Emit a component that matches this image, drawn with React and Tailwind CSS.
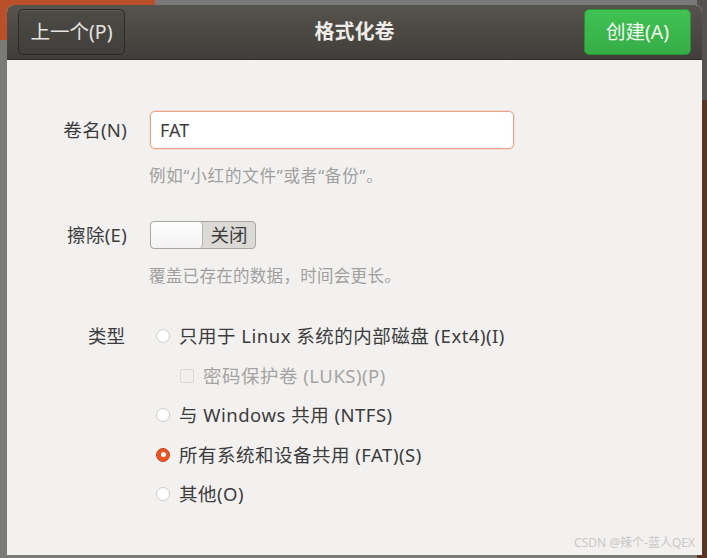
import React, { useState } from 'react';

const font = { fontFamily: '"Noto Sans", "Noto Sans CJK SC", sans-serif' };

const Radio = ({ checked }) => (
    <span
        className={`w-[14px] h-[14px] rounded-full border shrink-0 flex items-center justify-center ${checked ? 'bg-[#e95420] border-[#c7461a]' : 'bg-white border-[#cfcdca]'}`}
    >
        {checked && <span className="w-[5px] h-[5px] rounded-full bg-white" />}
    </span>
);

const App = () => {
    const [volumeName, setVolumeName] = useState('FAT');
    const [type, setType] = useState('fat');

    const options = [
        { id: 'ext4', label: '只用于 Linux 系统的内部磁盘 (Ext4)(I)' },
        { id: 'ntfs', label: '与 Windows 共用 (NTFS)' },
        { id: 'fat', label: '所有系统和设备共用 (FAT)(S)' },
        { id: 'other', label: '其他(O)' },
    ];

    return (
        <div className="relative w-[707px] h-[558px] overflow-hidden bg-[#7a7a78]" style={font}>
            {/* desktop behind the dialog */}
            <div className="absolute left-0 top-0 w-[155px] h-[40px] bg-[#b9502a]" />
            <div className="absolute right-0 top-[100px] w-[10px] h-[460px] bg-[#5a3424]" />
            <div className="absolute right-0 top-0 w-[10px] h-[100px] bg-[#55534f]" />

            <div className="relative ml-[7px] mt-[5px] w-[695px] h-[550px] rounded-t-[7px] overflow-hidden bg-[#f2f1f0] flex flex-col">
                {/* Header */}
                <div className="h-[55px] shrink-0 bg-gradient-to-b from-[#57544e] to-[#403e3a] border-b border-[#2f2e2b] flex items-center justify-between px-[11px]">
                    <button className="w-[107px] h-[46px] rounded-[5px] border border-[#2b2a27] bg-gradient-to-b from-[#4d4b46] to-[#413f3b] shadow-[inset_0_1px_0_rgba(255,255,255,0.08)] text-[#e6e4e0] text-[19.5px] leading-none">
                        上一个(P)
                    </button>
                    <div className="text-[#eeece8] text-[20px] font-bold leading-none">格式化卷</div>
                    <button className="w-[107px] h-[46px] rounded-[5px] border border-[#2a8f37] bg-gradient-to-b from-[#41c253] to-[#35ad46] text-[#f4fbf4] text-[19.5px] leading-none">
                        创建(A)
                    </button>
                </div>

                {/* Body */}
                <div className="flex flex-col pt-[51px]">
                    <div className="flex items-center h-[38px]">
                        <div className="w-[120px] text-right text-[18.5px] leading-[24px] tracking-[0.3px] text-[#3c3c3c]">卷名(N)</div>
                        <div className="ml-[23px] w-[364px] h-[38px] rounded-[5px] border border-[#e8a38a] bg-white shadow-[0_0_0_1px_rgba(233,84,32,0.12)] flex items-center px-[9px]">
                            <input
                                value={volumeName}
                                onChange={(e) => setVolumeName(e.target.value)}
                                className="w-full outline-none text-[18px] text-[#3c3c3c] bg-transparent caret-[#3c3c3c]"
                            />
                        </div>
                    </div>
                    <div className="ml-[142px] mt-[15px] text-[16.5px] leading-[24px] tracking-[0.8px] text-[#a09f9d]">例如“小红的文件”或者“备份”。</div>

                    <div className="flex items-center mt-[33px] h-[28px]">
                        <div className="w-[120px] text-right text-[18.5px] leading-[24px] tracking-[0.3px] text-[#3c3c3c]">擦除(E)</div>
                        <div className="ml-[23px] w-[106px] h-[28px] rounded-[4px] border border-[#a9a7a3] bg-[#dcdad7] flex overflow-hidden">
                            <div className="w-[52px] h-full rounded-[4px] bg-gradient-to-b from-white to-[#f3f2f1] border-r border-[#b6b4b0]" />
                            <div className="flex-1 flex items-center justify-center text-[18.5px] leading-none text-[#3c3c3c]">关闭</div>
                        </div>
                    </div>
                    <div className="ml-[142px] mt-[15px] text-[16.5px] leading-[24px] tracking-[0.3px] text-[#a09f9d]">覆盖已存在的数据，时间会更长。</div>

                    <div className="flex mt-[36px]">
                        <div className="w-[118px] text-right text-[18.5px] text-[#3c3c3c] leading-[24px]">类型</div>
                        <div className="ml-[31px] flex flex-col gap-[15.5px]">
                            {options.map((o) => (
                                <React.Fragment key={o.id}>
                                    <label
                                        onClick={() => setType(o.id)}
                                        className="flex items-center gap-[9px] h-[24px] text-[18.5px] tracking-[0.5px] text-[#3c3c3c] cursor-pointer"
                                    >
                                        <Radio checked={type === o.id} />
                                        {o.label}
                                    </label>
                                    {o.id === 'ext4' && (
                                        <div className="flex items-center gap-[9px] h-[24px] ml-[24px] text-[18.5px] tracking-[0.5px] text-[#a5a4a2]">
                                            <span className="w-[14px] h-[14px] rounded-[2px] border border-[#dad8d5] bg-[#f0efee]" />
                                            密码保护卷 (LUKS)(P)
                                        </div>
                                    )}
                                </React.Fragment>
                            ))}
                        </div>
                    </div>
                </div>

                <div className="absolute right-[7px] bottom-[3px] text-[12px] text-[#c9c8c6]">CSDN @辣个-蓝人QEX</div>
            </div>
        </div>
    );
};

export default App;
